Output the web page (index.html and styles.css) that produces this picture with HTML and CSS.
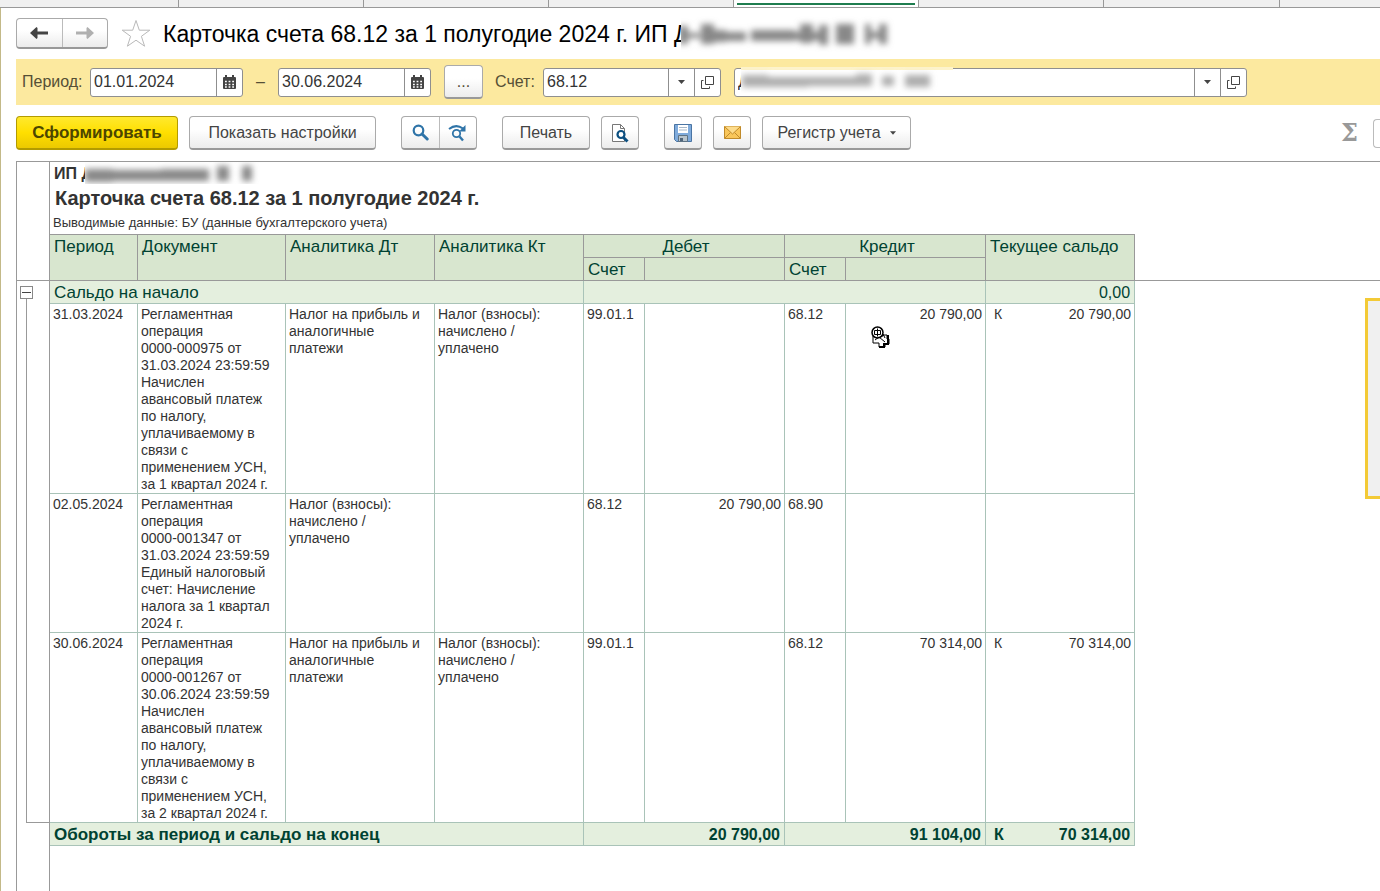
FILE: index.html
```html
<!DOCTYPE html>
<html lang="ru">
<head>
<meta charset="utf-8">
<title>Карточка счета 68.12 за 1 полугодие 2024 г.</title>
<link rel="stylesheet" href="styles.css">
</head>
<body>
<div class="tabs">
  <span class="tab"></span><span class="tab"></span><span class="tab"></span><span class="tab"></span><span class="tab active"></span><span class="tab"></span><span class="tab narrow"></span><span class="tab last"></span>
</div>
<main class="window">
  <header class="titlebar">
    <div class="group nav">
      <button type="button" aria-label="Назад"><svg width="18" height="12" viewBox="0 0 18 12"><path d="M0 6 6.500 0 7.500 1v3.500H18v3H7.500V11l-1 1z" fill="#444"/></svg></button>
      <button type="button" aria-label="Вперед"><svg width="18" height="12" viewBox="0 0 18 12"><path d="M18 6 11.500 0l-1 1v3.500H0v3h10.500V11l1 1z" fill="#b0b0b0"/></svg></button>
    </div>
    <svg class="star" width="30" height="29" viewBox="0 0 30 29"><path d="M15 1.500 18.300 11.200H28.800L20.400 17.300 23.600 27.200 15 21.200 6.400 27.200 9.600 17.300 1.200 11.200H11.700z" fill="#fff" stroke="#b9b9b9"/></svg>
    <h1>Карточка счета 68.12 за 1 полугодие 2024 г. ИП Д</h1>
    <svg class="smudge big" width="220" height="36" viewBox="0 0 220 36" aria-hidden="true"><defs><filter id="b1" x="-10%" y="-50%" width="120%" height="200%"><feGaussianBlur stdDeviation="3"/></filter></defs><path d="M0 0H220V36H0z" fill="#fff"/><g filter="url(#b1)" fill="#888"><path d="M-2 10h9v18H-2z"/><path d="M7 17h12v5H7zM20 8h13v20H20zM33 14h12v12H33zM45 16h20v9H45z"/><path d="M70 14h44v11H70zM112 16h28v8h-28zM119 8h13v19h-13zM138 9h9v20h-9zM155 8h18v20h-18zM184 8h6v20h-6zM190 16h10v6h-10zM198 8h8v20h-8z"/></g></svg>
  </header>

  <form class="filters">
    <label for="from">Период:</label>
    <span class="field date"><input id="from" value="01.01.2024"><button type="button" aria-label="Календарь"><svg width="13" height="14" viewBox="0 0 13 14"><use href="#cal"/></svg></button></span>
    <span class="dash">–</span>
    <span class="field date"><input aria-label="Конец периода" value="30.06.2024"><button type="button" aria-label="Календарь"><svg width="13" height="14" viewBox="0 0 13 14"><use href="#cal"/></svg></button></span>
    <button type="button" class="btn more">...</button>
    <label for="acc" class="acc-label">Счет:</label>
    <span class="field account"><input id="acc" value="68.12"><button type="button" aria-label="Выбрать"><svg width="7" height="4" viewBox="0 0 7 4"><use href="#caret"/></svg></button><button type="button" aria-label="Открыть"><svg width="13" height="13" viewBox="0 0 13 13"><use href="#open"/></svg></button></span>
    <span class="field org"><input aria-label="Организация" value="Д"><button type="button" aria-label="Выбрать"><svg width="7" height="4" viewBox="0 0 7 4"><use href="#caret"/></svg></button><button type="button" aria-label="Открыть"><svg width="13" height="13" viewBox="0 0 13 13"><use href="#open"/></svg></button>
      <svg class="smudge mid" width="212" height="26" viewBox="0 0 212 26" aria-hidden="true"><defs><filter id="b2" x="-10%" y="-50%" width="120%" height="200%"><feGaussianBlur stdDeviation="3"/></filter></defs><path d="M0 0H212V26H0z" fill="#fff"/><path d="M0 0H212V3H0z" fill="#fdf3cb"/><g filter="url(#b2)" fill="#adadad"><path d="M1 8h26v12H1zM25 10h42v10H25zM65 10h50v9H65zM115 7h16v12h-16zM141 9h12v10h-12zM164 8h25v12h-25z"/></g></svg>
    </span>
  </form>

  <div class="toolbar">
    <button type="button" class="btn primary">Сформировать</button>
    <button type="button" class="btn settings">Показать настройки</button>
    <div class="group find">
      <button type="button" aria-label="Найти"><svg width="17" height="17" viewBox="0 0 17 17" fill="none" stroke="#2f74a8"><circle cx="6.500" cy="6.500" r="4.800" stroke-width="2.200"/><path d="m10 10 5.200 5" stroke-width="3" stroke-linecap="round"/></svg></button>
      <button type="button" aria-label="Найти далее"><svg width="19" height="18" viewBox="0 0 19 18" fill="none" stroke="#2f74a8"><circle cx="8.500" cy="9.500" r="3.700" stroke-width="1.800"/><path d="m11.500 12.500 3.500 4" stroke-width="2.400"/><path d="M1 5Q8-.5 15 4.500" stroke-width="2"/><path d="M17.500 1v6.500H11z" fill="#2f74a8" stroke="none"/></svg></button>
    </div>
    <button type="button" class="btn print">Печать</button>
    <button type="button" class="btn icon preview" aria-label="Просмотр"><svg width="18" height="20" viewBox="0 0 18 20"><path d="M1.500 1.500h8l4 4v13h-12z" fill="#fff" stroke="#777"/><path d="M9.500 1.500v4h4" fill="none" stroke="#777"/><circle cx="10" cy="11.500" r="3.500" fill="#fff" stroke="#0b4f80" stroke-width="2.200"/><path d="m12.500 14.500 4 4" stroke="#0b4f80" stroke-width="3"/></svg></button>
    <button type="button" class="btn icon save" aria-label="Сохранить"><svg width="18" height="18" viewBox="0 0 18 18"><path d="M.5.5h17v17h-15l-2-2z" fill="#7fabdc" stroke="#4a74a3"/><path d="M4 1h10v8H4z" fill="#fff"/><path d="M5 3.500h8M5 6h8" stroke="#a8b8c8"/><path d="M4.500 11.500h9v6h-9z" fill="#b8c4cc" stroke="#5e7384"/><path d="M6 14h3v3H6z" fill="#50657a"/></svg></button>
    <button type="button" class="btn icon" aria-label="Отправить"><svg width="17" height="13" viewBox="0 0 17 13" stroke="#c08a2a"><path d="M.5.5h16v12H.5z" fill="#f9c65a"/><path d="m.5 12.500 6-6m4 0 6 6" fill="none"/><path d="m.5.500 8 7.500 8-7.500" fill="#fddc8c"/></svg></button>
    <button type="button" class="btn register">Регистр учета<svg width="6" height="4" viewBox="0 0 7 4"><use href="#caret"/></svg></button>
    <span class="sum">Σ</span>
    <input class="sum-box" aria-label="Сумма">
  </div>

  <section class="sheet">
    <table>
      <colgroup><col class="c-gutter"><col class="c-period"><col class="c-doc"><col class="c-an"><col class="c-an"><col class="c-acc"><col class="c-sum"><col class="c-acc"><col class="c-sum"><col class="c-mark"><col class="c-bal"><col></colgroup>
      <thead>
        <tr>
          <td class="gutter"></td>
          <td colspan="10" class="heading">
            <div class="owner">ИП Д<svg class="smudge small" width="194" height="22" viewBox="0 0 194 22" aria-hidden="true"><defs><filter id="b3" x="-10%" y="-50%" width="120%" height="200%"><feGaussianBlur stdDeviation="3"/></filter></defs><path d="M0 0H194V22H0z" fill="#fff"/><g filter="url(#b3)" fill="#888"><path d="M0 7h28v13H0zM26 8h52v11H26zM76 7h48v12H76zM132 4h12v15h-12zM157 4h10v15h-10z"/></g></svg></div>
            <h2>Карточка счета 68.12 за 1 полугодие 2024 г.</h2>
            <p>Выводимые данные: БУ (данные бухгалтерского учета)</p>
          </td>
          <td></td>
        </tr>
        <tr class="head">
          <td rowspan="2" class="gutter line"></td>
          <th rowspan="2">Период</th><th rowspan="2">Документ</th><th rowspan="2">Аналитика Дт</th><th rowspan="2">Аналитика Кт</th>
          <th colspan="2" class="center">Дебет</th><th colspan="2" class="center">Кредит</th>
          <th rowspan="2" colspan="2">Текущее сальдо</th><td rowspan="2" class="line"></td>
        </tr>
        <tr class="head"><th>Счет</th><th></th><th>Счет</th><th></th></tr>
      </thead>
      <tbody>
        <tr class="total">
          <td rowspan="4" class="gutter tree"><button type="button" aria-label="Свернуть"></button></td>
          <td colspan="4" class="caption">Сальдо на начало</td><td colspan="4"></td><td colspan="2" class="num">0,00</td><td class="blank"></td>
        </tr>
        <tr class="data">
          <td>31.03.2024</td>
          <td>Регламентная операция<br>0000-000975 от 31.03.2024 23:59:59<br>Начислен<br>авансовый платеж по налогу, уплачиваемому в связи с<br>применением УСН, за 1 квартал 2024 г.</td>
          <td>Налог на прибыль и аналогичные платежи</td><td>Налог (взносы): начислено / уплачено</td>
          <td>99.01.1</td><td></td><td>68.12</td><td class="num">20 790,00</td><td class="mark">К</td><td class="num">20 790,00</td><td class="blank"></td>
        </tr>
        <tr class="data">
          <td>02.05.2024</td>
          <td>Регламентная операция<br>0000-001347 от 31.03.2024 23:59:59<br>Единый налоговый счет: Начисление налога за 1 квартал 2024 г.</td>
          <td>Налог (взносы): начислено / уплачено</td><td></td>
          <td>68.12</td><td class="num">20 790,00</td><td>68.90</td><td></td><td class="mark"></td><td></td><td class="blank"></td>
        </tr>
        <tr class="data">
          <td>30.06.2024</td>
          <td>Регламентная операция<br>0000-001267 от 30.06.2024 23:59:59<br>Начислен<br>авансовый платеж по налогу, уплачиваемому в связи с<br>применением УСН, за 2 квартал 2024 г.</td>
          <td>Налог на прибыль и аналогичные платежи</td><td>Налог (взносы): начислено / уплачено</td>
          <td>99.01.1</td><td></td><td>68.12</td><td class="num">70 314,00</td><td class="mark">К</td><td class="num">70 314,00</td><td class="blank"></td>
        </tr>
      </tbody>
      <tfoot>
        <tr class="total final">
          <td class="gutter"></td>
          <td colspan="4" class="caption">Обороты за период и сальдо на конец</td><td colspan="2" class="num">20 790,00</td><td colspan="2" class="num">91 104,00</td><td class="mark">К</td><td class="num">70 314,00</td><td class="blank"></td>
        </tr>
      </tfoot>
    </table>
    <div class="rest"></div>
  </section>
</main>
<aside class="panel"></aside>
<svg class="cursor" width="20" height="22" viewBox="0 0 20 22" aria-hidden="true"><path d="M4 10h9V9h4v4h2v5h-4v3H9v-4H3v-7z" fill="#fff" stroke="#000"/><path d="M18 9v9h-4v3H9" fill="none" stroke="#000" stroke-width="2"/><circle cx="7.500" cy="6.500" r="5.500" fill="#fff" stroke="#000" stroke-width="1.500"/><path d="M7.500 2.500v8M4.500 4.500h6v4h-6zM5 14l4-3 6 5M13 8l2 4" fill="none" stroke="#000"/></svg>
<svg width="0" height="0" class="defs" aria-hidden="true"><defs>
  <g id="cal"><path d="M1 2h11a1 1 0 0 1 1 1v10a1 1 0 0 1-1 1H1a1 1 0 0 1-1-1V3a1 1 0 0 1 1-1z" fill="#444"/><path d="M3 0v3M10 0v3" stroke="#444" stroke-width="2"/><path d="M2 6.500h9M2 9.500h9M2 12h9" stroke="#fff" stroke-width="1.600" stroke-dasharray="1.800"/></g>
  <path id="caret" d="M0 0h7L3.500 4z" fill="#444"/>
  <g id="open" fill="none" stroke="#444"><path d="M4.500.5h8v8h-8z"/><path d="M2.500 4.500h-2v8h8v-2"/></g>
</defs></svg>
</body>
</html>
```
FILE: styles.css
```css
* { box-sizing: border-box; }
body { margin: 0; min-height: 100vh; display: flex; flex-direction: column; overflow: hidden; background: #fff; color: #444; font: 16px/20px "Liberation Sans", Arial, sans-serif; }
h1, h2, p { margin: 0; }
button, input { font: inherit; color: inherit; padding: 0; margin: 0; border: 0; background: none; }
svg { display: block; flex: none; }
.defs { position: absolute; }

.tabs { display: flex; height: 8px; background: #f0f0f0; border-bottom: 1px solid #999; }
.tab { width: 185px; border-right: 1px solid #999; }
.tab:first-child { width: 179px; }
.tab.narrow { width: 176px; }
.tab.last { flex: 1; border: 0; }
.tab.active { background: #fff; padding: 3px 3px 0; }
.tab.active::before { content: ""; display: block; height: 2px; background: #1f7d4f; }

.window { flex: 1; display: flex; flex-direction: column; padding-left: 15px; border-left: 1px solid #c3b988; }
.titlebar { display: flex; align-items: center; height: 51px; }
.group { display: flex; border: 1px solid #aaa; border-bottom: 2px solid #999; border-radius: 4px; background: linear-gradient(#fff 40%, #ececec); }
.group button { flex: 1; display: flex; align-items: center; justify-content: center; }
.group button + button { border-left: 1px solid #bbb; }
.nav { width: 92px; height: 31px; }
.star { margin: 0 12px 0 13px; }
h1 { font-size: 23px; line-height: 28px; font-weight: 400; color: #000; white-space: nowrap; }
.smudge { position: relative; }
.big { margin-left: -9px; }

.filters { display: flex; align-items: center; height: 46px; padding-left: 6px; background: #fce99f; color: #554f36; }
.field { display: flex; height: 29px; background: #fff; border: 1px solid #8f8f8f; border-radius: 3px; color: #333; position: relative; }
.field input { flex: 1; min-width: 0; padding-left: 3px; }
.field button { width: 26px; display: flex; align-items: center; justify-content: center; border-left: 1px solid #8f8f8f; }
.date { width: 153px; }
.filters label { width: 68px; }
.filters .acc-label { width: 48px; }
.dash { width: 35px; text-align: center; }
.account { width: 178px; margin-right: 13px; }
.org { width: 513px; }
.mid { position: absolute; left: 6px; top: -2px; }
.btn { height: 34px; border: 1px solid #aaa; border-bottom: 2px solid #999; border-radius: 4px; background: linear-gradient(#fff 40%, #ececec); display: flex; align-items: center; justify-content: center; }
.more { width: 39px; margin: 0 12px 0 13px; }

.toolbar { display: flex; align-items: center; padding: 11px 0; height: 56px; }
.primary { width: 162px; font-size: 17px; font-weight: 700; color: #4c4600; background: linear-gradient(#ffe92e, #ffdf00 50%, #ecc900); border-color: #b39b00; }
.settings { width: 187px; margin: 0 25px 0 11px; }
.find { width: 76px; height: 34px; margin-right: 25px; }
.print { width: 88px; margin-right: 11px; }
.icon { width: 38px; margin-right: 11px; }
.preview { margin-right: 25px; }
.register { width: 149px; gap: 9px; }
.sum { margin-left: auto; width: 32px; font: 700 24px/28px "DejaVu Serif", serif; color: #999; }
.sum-box { width: 7px; height: 29px; border: 1px solid #bbb; border-right: 0; border-radius: 4px 0 0 4px; }

.sheet { flex: 1; display: flex; flex-direction: column; border-top: 1px solid #999; }
table { width: 100%; table-layout: fixed; border-collapse: separate; border-spacing: 0; }
.c-gutter { width: 34px; }
.c-period { width: 88px; }
.c-doc { width: 148px; }
.c-an { width: 149px; }
.c-acc { width: 61px; }
.c-sum { width: 140px; }
.c-mark { width: 30px; }
.c-bal { width: 119px; }
td, th { padding: 0; text-align: left; vertical-align: top; font-weight: 400; }
.gutter { border: solid #999; border-width: 0 1px; }
.line { border-bottom: 1px solid #999; }
.heading { height: 73px; border-bottom: 1px solid #999; color: #333; }
.owner { display: flex; height: 22px; padding-left: 4px; font-size: 16px; line-height: 24px; font-weight: 700; }
.small { margin-left: -8px; }
h2 { padding-left: 5px; font-size: 20px; line-height: 28px; }
p { padding-left: 3px; font-size: 13px; line-height: 22px; }
.head th { height: 23px; padding: 2px 0 0 4px; font-size: 17px; background: #d8e6cf; color: #004232; border: solid #999; border-width: 0 1px 1px 0; }
.head .center { text-align: center; }
.total td:not(.gutter, .blank) { height: 23px; padding: 2px 4px 0; background: #e4efde; color: #004232; border: solid #a9c3b8; border-width: 0 1px 1px 0; }
.total .caption { font-size: 17px; }
.final td { font-weight: 700; }
.data td:not(.blank) { padding: 2px 8px 0 3px; font-size: 14px; line-height: 17px; color: #333; border: solid #a9c3b8; border-width: 0 1px 1px 0; }
tbody .num, tfoot .num { text-align: right; }
.data td.num:not(.blank) { padding-right: 3px; }
.data td.mark:not(.blank), .total td.mark:not(.gutter, .blank) { padding-left: 8px; padding-right: 0; border-right: 0; }
.tree { position: relative; }
.tree::after { content: ""; position: absolute; left: 9px; top: 18px; right: 0; bottom: 0; border: solid #999; border-width: 0 0 1px 1px; }
.tree button { display: flex; align-items: center; width: 13px; height: 13px; margin: 5px 0 0 3px; padding: 0 1px; border: 1px solid #888; }
.tree button::before { content: ""; flex: 1; height: 1px; background: #444; }
.rest { flex: 1; width: 34px; border: solid #999; border-width: 0 1px; }

.panel { position: absolute; right: 0; top: 298px; width: 15px; height: 201px; background: #f0f0f0; border: 3px solid #f3ca36; border-right: 0; }
.cursor { position: absolute; left: 870px; top: 326px; }
```
